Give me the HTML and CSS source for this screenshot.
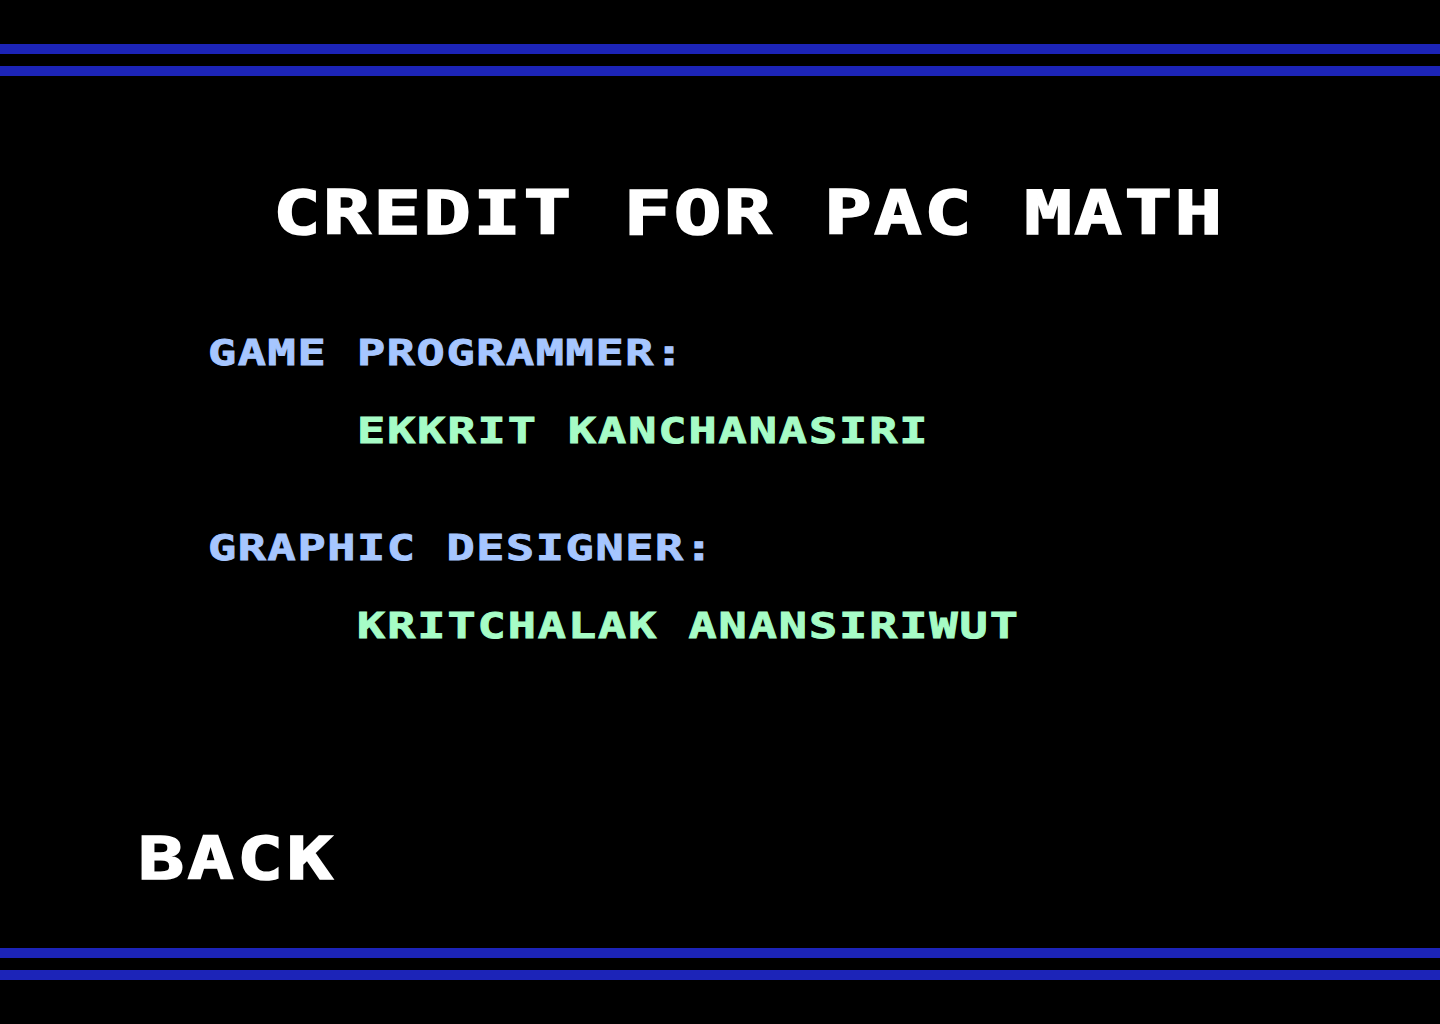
FILE: index.html
```html
<!DOCTYPE html>
<html lang="en">
<head>
<meta charset="utf-8">
<title>Credit for Pac Math</title>
<link rel="stylesheet" href="styles.css">
</head>
<body>
<div class="screen">
  <div class="stripes stripes-top">
    <div class="stripe"></div>
    <div class="stripe"></div>
  </div>
  <main class="content">
    <h1 class="title"><span class="px">CREDIT FOR PAC MATH</span></h1>
    <section class="credit credit-first">
      <div class="role"><span class="px">GAME PROGRAMMER:</span></div>
      <div class="name"><span class="px">EKKRIT KANCHANASIRI</span></div>
    </section>
    <section class="credit credit-second">
      <div class="role"><span class="px">GRAPHIC DESIGNER:</span></div>
      <div class="name"><span class="px">KRITCHALAK ANANSIRIWUT</span></div>
    </section>
  </main>
  <div class="back"><span class="px">BACK</span></div>
  <div class="stripes stripes-bottom">
    <div class="stripe"></div>
    <div class="stripe"></div>
  </div>
</div>
</body>
</html>
```
FILE: styles.css
```css
html, body {
  margin: 0;
  padding: 0;
  background: #000;
}

.screen {
  width: 1440px;
  height: 1024px;
  background: #000;
  display: flex;
  flex-direction: column;
  font-family: "DejaVu Sans Mono", "Liberation Mono", monospace;
  font-weight: bold;
  overflow: hidden;
}

.stripes {
  display: flex;
  flex-direction: column;
  gap: 12px;
}

.stripes-top {
  padding-top: 44px;
}

.stripe {
  height: 10px;
  background: #1c24b8;
}

.content {
  display: flex;
  flex-direction: column;
}

.px {
  display: inline-block;
  white-space: pre;
  transform: scaleX(1.3);
  transform-origin: left center;
}

.title {
  margin: 106px 0 0 273px;
  font-size: 61px;
  line-height: 61px;
  font-weight: bold;
  color: #ffffff;
  letter-spacing: 1.8px;
  -webkit-text-stroke: 1.6px #ffffff;
}

.credit {
  display: flex;
  flex-direction: column;
  gap: 42px;
}

.credit-first {
  margin-top: 92px;
}

.credit-second {
  margin-top: 81px;
}

.role {
  margin-left: 208px;
  font-size: 36px;
  line-height: 36px;
  color: #a6c6ff;
  letter-spacing: 1.25px;
  -webkit-text-stroke: 0.9px #a6c6ff;
}

.name {
  margin-left: 357px;
  font-size: 36px;
  line-height: 36px;
  color: #a6fcc6;
  letter-spacing: 1.5px;
  -webkit-text-stroke: 0.9px #a6fcc6;
}

.back {
  margin: 185px 0 0 138px;
  font-size: 59px;
  line-height: 59px;
  color: #ffffff;
  letter-spacing: 2.6px;
  -webkit-text-stroke: 1.6px #ffffff;
}

.stripes-bottom {
  margin-top: 60px;
}
```
